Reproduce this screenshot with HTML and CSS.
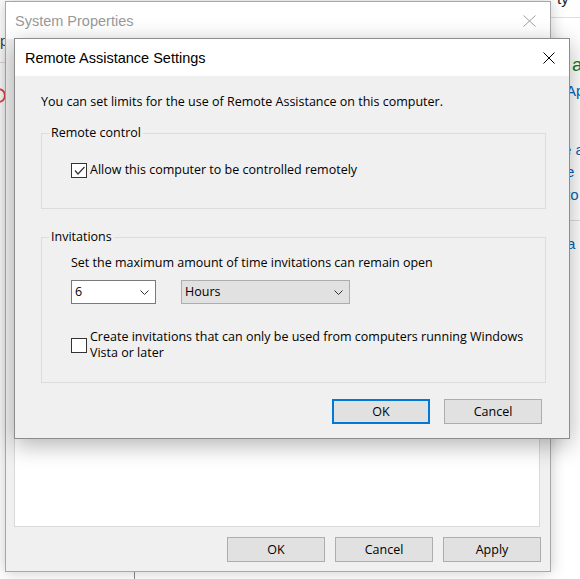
FILE: index.html
```html
<!DOCTYPE html>
<html lang="en">
  <head>
    <meta charset="UTF-8" />
    <title>Remote Assistance Settings</title>
    <link rel="stylesheet" href="styles.css">
  </head>
  <body>
    <div class="desktop">
      <!-- bits of the Settings app behind the dialogs -->
      <span class="bg-text bg-p">p</span>
      <span class="bg-ring"></span>
      <span class="bg-line bg-line-left"></span>
      <span class="bg-text bg-ty">ty</span>
      <span class="bg-line bg-line-top"></span>
      <span class="bg-text bg-green">a</span>
      <span class="bg-text bg-link bg-l1">Ap</span>
      <span class="bg-text bg-link bg-l2">e a</span>
      <span class="bg-text bg-link bg-l3">e</span>
      <span class="bg-text bg-link bg-l4">to</span>
      <span class="bg-line bg-line-mid"></span>
      <span class="bg-text bg-link bg-l5">a</span>
      <span class="bg-edge"></span>

      <div class="window sysprops">
        <div class="sp-title">
          <span>System Properties</span>
          <svg class="close-x" width="13" height="12" viewBox="0 0 13 12">
            <path d="M0.5 0.5 L12.5 11.5 M12.5 0.5 L0.5 11.5" stroke="#a0a0a0" stroke-width="1" fill="none" />
          </svg>
        </div>
        <div class="sp-body">
          <div class="sp-panel"></div>
          <div class="sp-buttons">
            <button class="btn">OK</button>
            <button class="btn">Cancel</button>
            <button class="btn">Apply</button>
          </div>
        </div>
      </div>

      <div class="window dialog">
        <div class="dlg-title">
          <span>Remote Assistance Settings</span>
          <svg class="close-x" width="12" height="12" viewBox="0 0 12 12">
            <path d="M0.5 0.5 L11.5 11.5 M11.5 0.5 L0.5 11.5" stroke="#000" stroke-width="1" fill="none" />
          </svg>
        </div>
        <div class="dlg-body">
          <p class="intro">You can set limits for the use of Remote Assistance on this computer.</p>

          <fieldset class="group group-remote">
            <legend>Remote control</legend>
            <label class="check-row">
              <span class="check">
                <svg width="13" height="13" viewBox="0 0 13 13">
                  <path d="M2 6.5 L5 10 L11.5 3" stroke="#333" stroke-width="1.2" fill="none" />
                </svg>
              </span>
              <span>Allow this computer to be controlled remotely</span>
            </label>
          </fieldset>

          <fieldset class="group group-invite">
            <legend>Invitations</legend>
            <p class="invite-text">Set the maximum amount of time invitations can remain open</p>
            <div class="combo-row">
              <div class="combo combo-num">
                <span>6</span>
                <svg width="9" height="5" viewBox="0 0 9 5"><path d="M0.5 0.5 L4.5 4.5 L8.5 0.5" stroke="#333" fill="none" /></svg>
              </div>
              <div class="combo combo-unit">
                <span>Hours</span>
                <svg width="9" height="5" viewBox="0 0 9 5"><path d="M0.5 0.5 L4.5 4.5 L8.5 0.5" stroke="#333" fill="none" /></svg>
              </div>
            </div>
            <label class="check-row check-row-wrap">
              <span class="check"></span>
              <span class="check-label">Create invitations that can only be used from computers running Windows Vista or later</span>
            </label>
          </fieldset>

          <div class="dlg-buttons">
            <button class="btn btn-default">OK</button>
            <button class="btn">Cancel</button>
          </div>
        </div>
      </div>
    </div>
  </body>
</html>
```

FILE: styles.css
```css
body {
  margin: 0;
  background-color: #fff;
  font-family: "Open Sans", "Liberation Sans", Arial, sans-serif;
  font-size: 12.5px;
  color: #000;
}

.desktop {
  position: relative;
  width: 580px;
  height: 579px;
  overflow: hidden;
}

/* background app fragments */
.bg-text {
  position: absolute;
  line-height: 1;
  white-space: nowrap;
  font-family: "Liberation Sans", Arial, sans-serif;
}

.bg-p {
  left: 0;
  top: 33px;
  font-size: 15px;
  color: #444;
}

.bg-ring {
  position: absolute;
  left: -9px;
  top: 88px;
  width: 11px;
  height: 11px;
  border: 2px solid #e0473c;
  border-radius: 50%;
}

.bg-line {
  position: absolute;
  height: 1px;
  background-color: #dedede;
}

.bg-line-left {
  left: 0;
  top: 62px;
  width: 5px;
}

.bg-ty {
  left: 557px;
  top: -9px;
  font-size: 15px;
  color: #222;
}

.bg-line-top {
  left: 551px;
  top: 17px;
  width: 29px;
}

.bg-green {
  left: 572px;
  top: 55px;
  font-size: 19px;
  color: #107c10;
}

.bg-link {
  font-size: 15px;
  color: #0067b8;
}

.bg-l1 {
  left: 566px;
  top: 83px;
}

.bg-l2 {
  left: 563px;
  top: 142px;
}

.bg-l3 {
  left: 566px;
  top: 164px;
}

.bg-l4 {
  left: 566px;
  top: 187px;
}

.bg-line-mid {
  left: 551px;
  top: 220px;
  width: 29px;
}

.bg-l5 {
  left: 567px;
  top: 236px;
}

.bg-edge {
  position: absolute;
  left: 134px;
  top: 571px;
  width: 1px;
  height: 8px;
  background-color: #888;
}

/* windows */
.window {
  position: absolute;
  box-sizing: border-box;
  display: flex;
  flex-direction: column;
  background-color: #f0f0f0;
}

.close-x {
  display: block;
}

.btn {
  box-sizing: border-box;
  width: 98px;
  height: 25px;
  margin: 0;
  padding: 0;
  border: 1px solid #adadad;
  background-color: #e1e1e1;
  font-family: inherit;
  font-size: 12.5px;
  color: #000;
}

.btn-default {
  border: 2px solid #0078d7;
}

.sysprops {
  left: 5px;
  top: 1px;
  width: 546px;
  height: 571px;
  border: 1px solid #a8a8a8;
  box-shadow: 0 0 14px rgba(0, 0, 0, 0.22);
}

.sp-title {
  display: flex;
  align-items: center;
  justify-content: space-between;
  height: 37px;
  padding: 0 14px 0 9px;
  background-color: #fff;
  font-family: "Liberation Sans", Arial, sans-serif;
  font-size: 14.5px;
  color: #999;
}

.sp-body {
  flex: 1;
  display: flex;
  flex-direction: column;
  padding: 30px 9px 9px 8px;
}

.sp-panel {
  flex: 1;
  margin-right: 1px;
  border: 1px solid #d9d9d9;
  background-color: #fff;
}

.sp-buttons {
  display: flex;
  justify-content: flex-end;
  gap: 10px;
  margin-top: 10px;
}

.dialog {
  left: 14px;
  top: 38px;
  width: 556px;
  height: 401px;
  border: 1px solid #8c8c8c;
  box-shadow: 0 6px 22px rgba(0, 0, 0, 0.3);
}

.dlg-title {
  display: flex;
  align-items: center;
  justify-content: space-between;
  height: 37px;
  padding: 0 14px 0 10px;
  background-color: #fff;
  font-family: "Liberation Sans", Arial, sans-serif;
  font-size: 14.5px;
}

.dlg-body {
  padding: 0 23px 0 26px;
  line-height: 16px;
}

.intro {
  margin: 18px 0 15px;
}

.group {
  margin: 0;
  padding: 0 0 0 7px;
  min-width: 0;
  border: 1px solid #dcdcdc;
}

.group legend {
  padding: 0 2px;
  line-height: 16px;
}

.group-remote {
  padding-bottom: 30px;
}

.group-invite {
  margin-top: 20px;
  padding-bottom: 21px;
}

.check-row {
  display: flex;
  align-items: center;
  gap: 3px;
  margin: 21px 0 0 22px;
}

.check {
  box-sizing: border-box;
  display: flex;
  align-items: center;
  justify-content: center;
  flex-shrink: 0;
  width: 16px;
  height: 15px;
  border: 1px solid #333;
  background-color: #fff;
}

.check-row-wrap {
  margin-top: 25px;
}

.check-label {
  width: 450px;
}

.invite-text {
  margin: 10px 0 0 22px;
}

.combo-row {
  display: flex;
  gap: 25px;
  margin: 9px 0 0 22px;
}

.combo {
  box-sizing: border-box;
  display: flex;
  align-items: center;
  justify-content: space-between;
  height: 24px;
  padding: 0 6px 0 3px;
}

.combo-num {
  width: 85px;
  border: 1px solid #7a7a7a;
  background-color: #fff;
}

.combo-unit {
  width: 169px;
  border: 1px solid #adadad;
  background-color: #e1e1e1;
}

.dlg-buttons {
  display: flex;
  justify-content: flex-end;
  gap: 14px;
  margin-top: 16px;
  padding-right: 4px;
}
```
